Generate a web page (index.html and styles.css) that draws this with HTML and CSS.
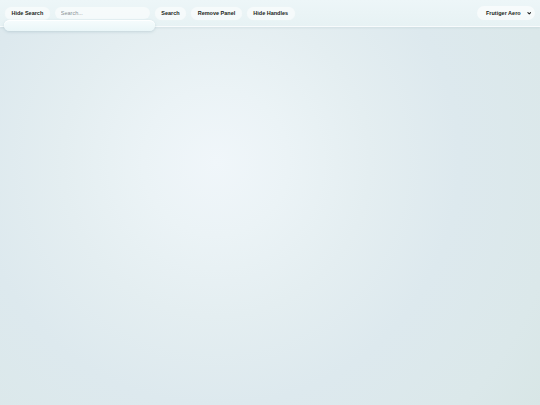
FILE: index.html
```html
<!DOCTYPE html>
<html lang="en">
<head>
<meta charset="utf-8">
<title>Frutiger Aero</title>
<link rel="stylesheet" href="styles.css">
</head>
<body>
<header class="toolbar">
  <button class="pill">Hide Search</button>
  <div class="search-box">
    <input class="search-input" type="text" placeholder="Search...">
  </div>
  <button class="pill">Search</button>
  <button class="pill">Remove Panel</button>
  <button class="pill">Hide Handles</button>
  <div class="spacer"></div>
  <div class="theme-select">
    <span class="theme-label">Frutiger Aero</span>
    <svg class="chev" viewBox="0 0 10 10" width="4.5" height="4.5"><path d="M2 3.5 L5 6.5 L8 3.5" fill="none" stroke="#222" stroke-width="2.4" stroke-linecap="round" stroke-linejoin="round"/></svg>
  </div>
</header>
<div class="results-panel"></div>
<main class="canvas"></main>
</body>
</html>
```
FILE: styles.css
```css
html, body {
  margin: 0;
  padding: 0;
  width: 540px;
  height: 405px;
  overflow: hidden;
}
body {
  font-family: "Liberation Sans", Arial, sans-serif;
  background:
    radial-gradient(circle at 40% 40%, #f0f6fa 0%, #ebf3f6 18%, #e4eef1 38%, #dde9ee 60%, #dbe8ea 85%, #d8e6e6 100%);
  position: relative;
}
.toolbar {
  height: 27px;
  box-sizing: border-box;
  display: flex;
  align-items: center;
  gap: 5px;
  padding: 0 5px;
  background: linear-gradient(#edf6f8, #e7f2f4);
  border-bottom: 1px solid rgba(255,255,255,0.6);
  box-shadow: 0 1px 2px rgba(120,150,160,0.15);
}
.pill {
  font-family: inherit;
  font-size: 5.5px;
  font-weight: bold;
  line-height: 7px;
  color: #1a1f21;
  padding: 3px 6.5px;
  border: none;
  border-radius: 999px;
  background: rgba(255,255,255,0.55);
  box-shadow: 0 0 1px rgba(255,255,255,0.8);
  cursor: pointer;
}
.search-box {
  display: flex;
}
.search-input {
  width: 95px;
  height: 12px;
  box-sizing: border-box;
  padding: 0 6px;
  border: none;
  border-radius: 999px;
  background: rgba(255,255,255,0.55);
  font-family: inherit;
  font-size: 5.5px;
  color: #333;
  outline: none;
}
.search-input::placeholder {
  color: #8a9296;
}
.spacer {
  flex: 1;
}
.theme-select {
  width: 58px;
  height: 14px;
  box-sizing: border-box;
  display: flex;
  align-items: center;
  justify-content: space-between;
  padding: 0 4px 0 9px;
  border-radius: 999px;
  background: rgba(255,255,255,0.6);
}
.theme-label {
  font-size: 5.5px;
  font-weight: bold;
  color: #1a1f21;
}
.chev {
  display: block;
}
.results-panel {
  position: absolute;
  left: 4px;
  top: 20px;
  width: 151px;
  height: 11px;
  border-radius: 6px;
  background: linear-gradient(#f6fcfd, #eaf6f8);
  box-shadow: 0 1px 3px rgba(100,140,150,0.25), inset 0 1px 0 rgba(255,255,255,0.9);
}
.canvas {
  height: 378px;
}
```
